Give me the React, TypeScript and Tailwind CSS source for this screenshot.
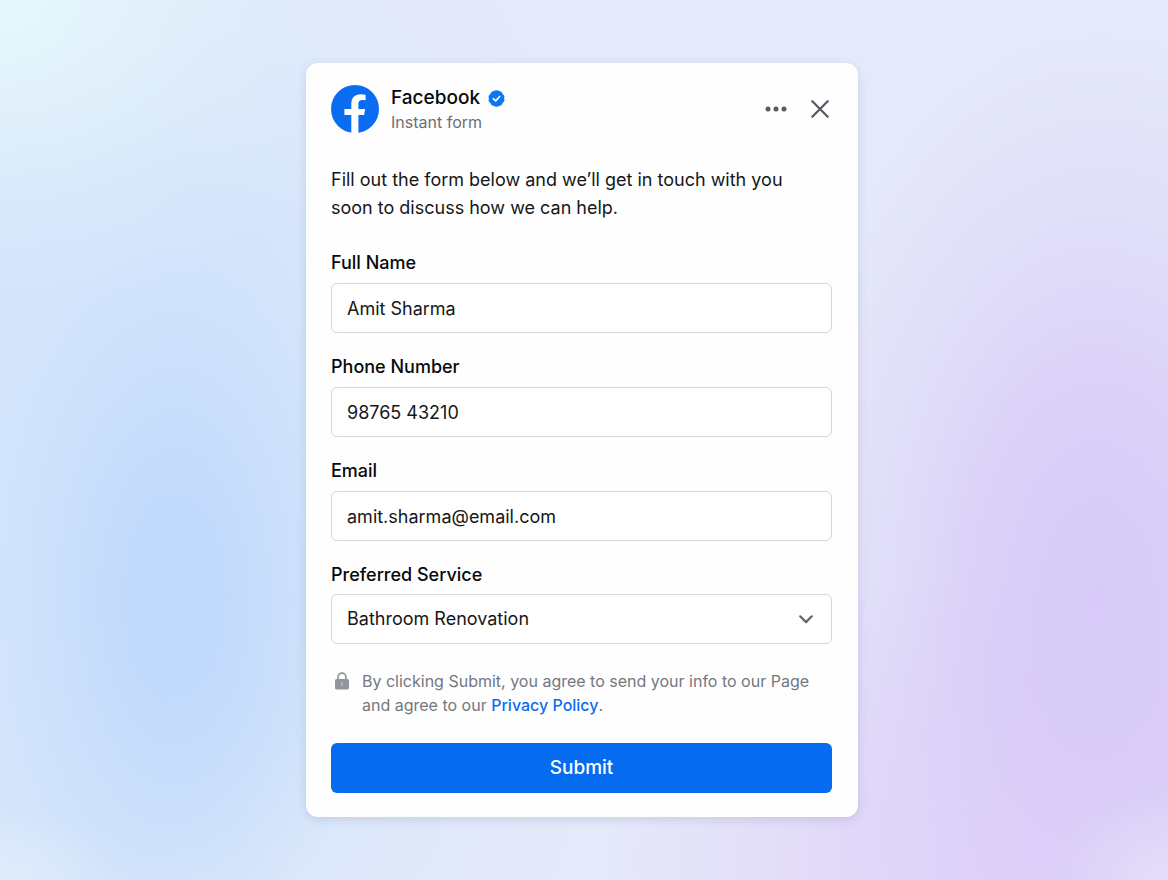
import { useState } from "react";
import type { FormEvent, ReactNode } from "react";

const controlClass =
  "block h-[50px] w-full rounded-md border border-[#d3d6dc] bg-white px-[15px] text-lg text-[#15171a] outline-none focus:border-[#0869ee]";

function FacebookLogo() {
  return (
    <svg viewBox="0 0 48 48" className="size-12 shrink-0" role="img" aria-label="Facebook logo">
      <circle cx="24" cy="24" r="24" fill="#0a6cf1" />
      <path
        d="M20.3 48V29.9H13.4V24H20.3V19.2C20.3 12.7 23.4 9.2 30 9.2C31.9 9.2 33.4 9.4 34.6 9.7V15.3C33.7 15.1 32.7 15 31.5 15C28.5 15 27.4 16.3 27.4 19.2V24H34.1L33.1 29.9H27.4V48Z"
        fill="#fff"
      />
    </svg>
  );
}

function VerifiedBadge() {
  return (
    <svg viewBox="0 0 18 18" className="size-[17px] shrink-0" role="img" aria-label="Verified">
      <path
        d="M9 1 11.4 1.6 13.8 2.4 15 4.7 16.7 6.6 16.4 9 16.7 11.4 15 13.3 13.8 15.6 11.4 16.4 9 17 6.6 16.4 4.2 15.6 3 13.3 1.3 11.4 1.6 9 1.3 6.6 3 4.7 4.2 2.4 6.6 1.6Z"
        fill="#0a78f2"
        stroke="#0a78f2"
        strokeWidth="1.4"
        strokeLinejoin="round"
      />
      <path d="m5.6 9.2 2.4 2.3 4.4-4.6" fill="none" stroke="#fff" strokeWidth="1.7" strokeLinecap="round" strokeLinejoin="round" />
    </svg>
  );
}

function LockIcon() {
  return (
    <svg viewBox="0 0 16 18" className="mt-[3px] h-[18px] w-4 shrink-0" aria-hidden="true">
      <path d="M4.1 8V5a3.9 3.9 0 0 1 7.8 0V8" fill="none" stroke="#92959c" strokeWidth="1.7" />
      <rect x="1" y="7" width="14" height="10.4" rx="1.6" fill="#92959c" />
      <path d="M8 10.8v2.6" stroke="#c9cbd0" strokeWidth="1.3" strokeLinecap="round" />
    </svg>
  );
}

function Field({ id, label, children }: { id: string; label: string; children: ReactNode }) {
  return (
    <div className="flex flex-col gap-2 last:gap-[7px]">
      <label htmlFor={id} className="text-lg leading-6 font-medium text-[#08090b]">
        {label}
      </label>
      {children}
    </div>
  );
}

export default function App() {
  const [name, setName] = useState("Amit Sharma");
  const [phone, setPhone] = useState("98765 43210");
  const [email, setEmail] = useState("amit.sharma@email.com");
  const [service, setService] = useState("Bathroom Renovation");

  const handleSubmit = (event: FormEvent) => event.preventDefault();

  return (
    <main className="flex min-h-screen items-center justify-center bg-[#e5e9f9] bg-[radial-gradient(ellipse_34%_36%_at_0%_0%,#e6f8fc_0%,#e4f4fbb0_35%,#e0effb50_70%,#e0effb00_100%),radial-gradient(ellipse_10%_8%_at_0%_100%,#e0ecfc_0%,#e0ecfc00_100%),radial-gradient(ellipse_10%_10%_at_100%_100%,#e6dcf9_0%,#e6dcf900_100%),radial-gradient(ellipse_16%_42%_at_15%_68%,#c0d9fc_0%,#c0d9fce0_30%,#c3dbfc70_65%,#c8dffc00_100%),radial-gradient(ellipse_46%_84%_at_8%_56%,#d2e4fc_0%,#d2e4fbe8_45%,#d8e8fb90_70%,#deebfb00_100%),radial-gradient(ellipse_28%_64%_at_94%_68%,#d7caf8_0%,#d8cbf8d0_35%,#dacff870_65%,#dfd8f900_100%),radial-gradient(ellipse_36%_34%_at_88%_98%,#e1d2f8_0%,#e1d2f8a0_50%,#e1d2f800_100%)] py-8 pr-5 pl-4 font-['Inter','Liberation_Sans',sans-serif]">
      <form
        onSubmit={handleSubmit}
        className="w-full max-w-[552px] rounded-xl bg-[#fefefe] pt-[21px] pr-[26px] pb-6 pl-[25px] shadow-[0_3px_10px_rgba(70,80,140,0.16)]"
      >
        <header className="flex items-center justify-between">
          <div className="flex items-center gap-3">
            <FacebookLogo />
            <div className="pt-0.5">
              <h1 className="flex items-center gap-2 text-[19px] leading-6 font-medium text-[#08090b]">
                Facebook
                <VerifiedBadge />
              </h1>
              <p className="text-base leading-6 text-[#6d7077]">Instant form</p>
            </div>
          </div>
          <div className="flex items-center gap-5">
            <button type="button" aria-label="More options" className="flex size-6 items-center justify-center text-[#565b64]">
              <svg viewBox="0 0 24 24" className="size-6" fill="currentColor" aria-hidden="true">
                <circle cx="4" cy="12" r="2.5" />
                <circle cx="12" cy="12" r="2.5" />
                <circle cx="20" cy="12" r="2.5" />
              </svg>
            </button>
            <button type="button" aria-label="Close" className="flex size-6 items-center justify-center text-[#565b64]">
              <svg viewBox="0 0 24 24" className="size-6" fill="none" stroke="currentColor" strokeWidth="2.3" strokeLinecap="round" aria-hidden="true">
                <path d="m4.3 4.3 15.4 15.4M19.7 4.3 4.3 19.7" />
              </svg>
            </button>
          </div>
        </header>

        <p className="mt-8 pr-8 text-lg leading-7 text-[#15171a]">
          Fill out the form below and we’ll get in touch with you soon to discuss how we can help.
        </p>

        <div className="mt-[29px] flex flex-col gap-[22px]">
          <Field id="full-name" label="Full Name">
            <input id="full-name" type="text" value={name} onChange={(e) => setName(e.target.value)} className={controlClass} />
          </Field>
          <Field id="phone" label="Phone Number">
            <input id="phone" type="tel" value={phone} onChange={(e) => setPhone(e.target.value)} className={controlClass} />
          </Field>
          <Field id="email" label="Email">
            <input id="email" type="email" value={email} onChange={(e) => setEmail(e.target.value)} className={controlClass} />
          </Field>
          <Field id="service" label="Preferred Service">
            <div className="relative">
              <select
                id="service"
                value={service}
                onChange={(e) => setService(e.target.value)}
                className={`${controlClass} appearance-none`}
              >
                <option>Bathroom Renovation</option>
              </select>
              <svg
                viewBox="0 0 20 20"
                className="pointer-events-none absolute inset-y-0 right-4 my-auto size-5"
                fill="none"
                stroke="#60646c"
                strokeWidth="2.2"
                strokeLinecap="round"
                strokeLinejoin="round"
                aria-hidden="true"
              >
                <path d="m4.2 7.3 5.8 5.8 5.8-5.8" />
              </svg>
            </div>
          </Field>
        </div>

        <div className="mt-[25px] flex gap-3 pl-[3px] text-base leading-6 text-[#74777e]">
          <LockIcon />
          <p>
            By clicking Submit, you agree to send your info to our Page and agree to our{" "}
            <a href="#privacy" className="font-medium text-[#0b6cf0]">
              Privacy Policy
            </a>
            .
          </p>
        </div>

        <button type="submit" className="mt-[26px] h-[50px] w-full rounded-md bg-[#056bef] text-[19px] leading-6 font-medium text-white">
          Submit
        </button>
      </form>
    </main>
  );
}
